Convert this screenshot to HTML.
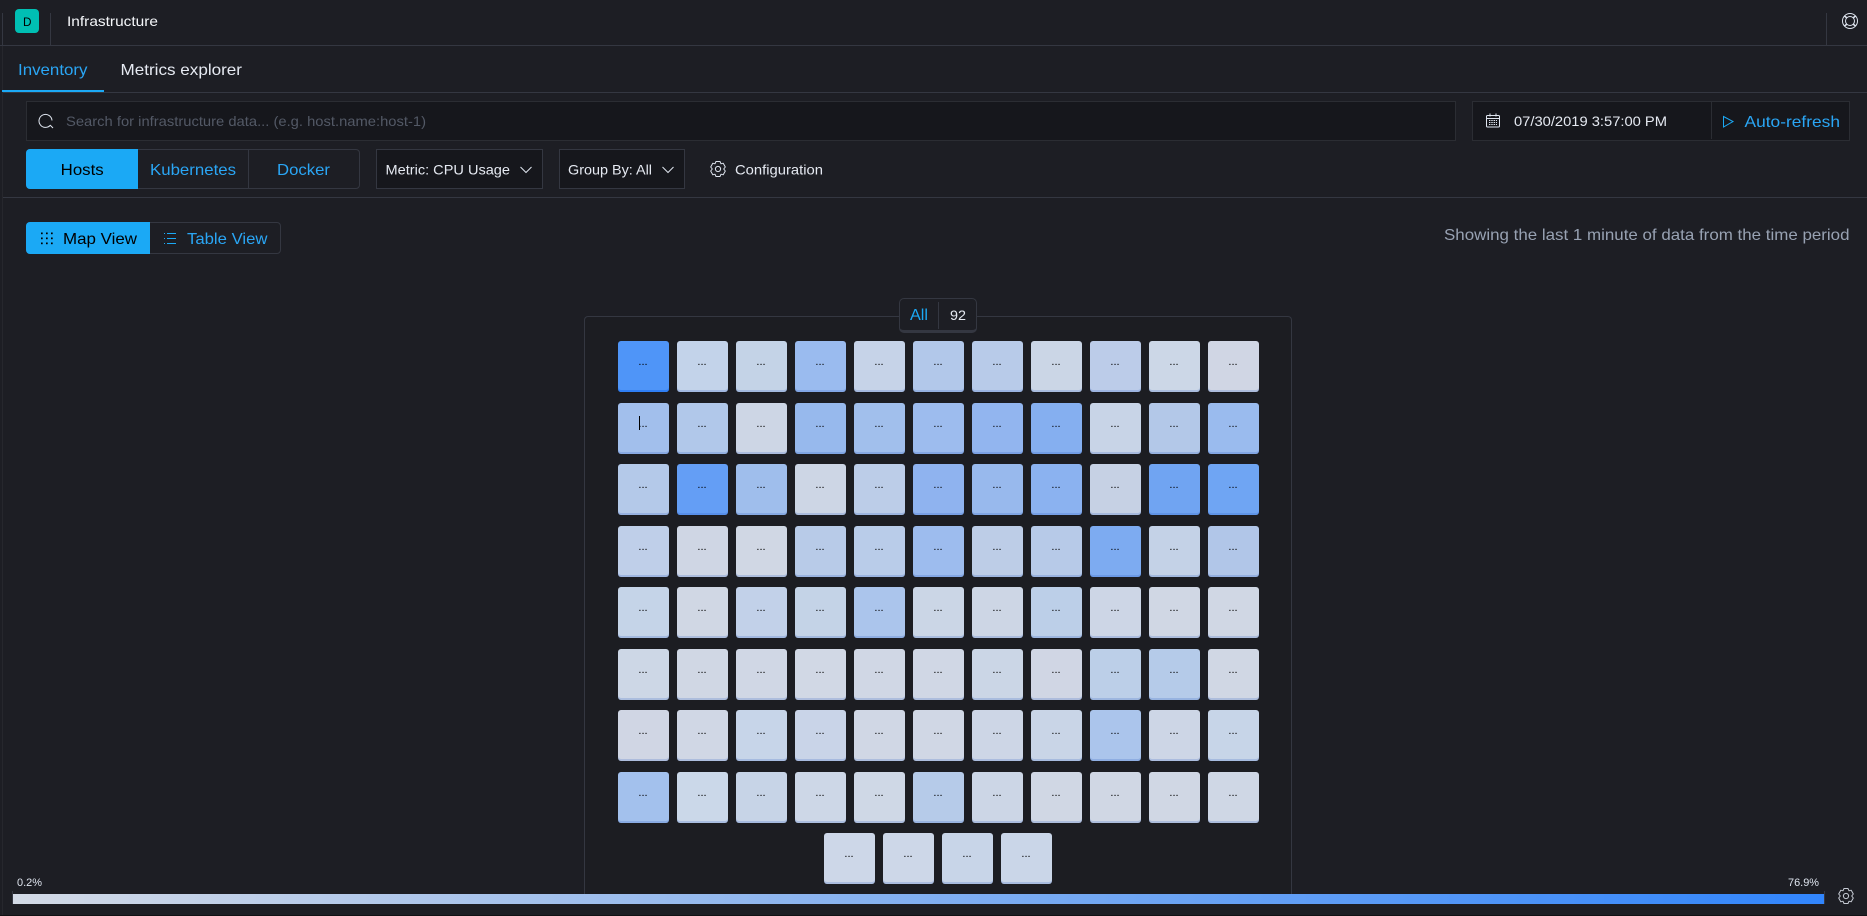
<!DOCTYPE html>
<html lang="en">
<head>
<meta charset="utf-8">
<title>Infrastructure</title>
<style>
html,body{margin:0;padding:0;width:1867px;height:916px;overflow:hidden;background:#1d1e24;font-family:"Liberation Sans",sans-serif}
.a{position:absolute;box-sizing:border-box}
.line{background:#343741}
.box{background:#16171c;border:1px solid #2b2d33}
.row{position:absolute;left:618px;display:flex;gap:8px}
.row.l{left:824px}
.c{width:51px;height:51px;border-radius:3px;box-shadow:inset 0 -2px 0 rgba(35,85,190,.2);text-align:center;font-size:11px;line-height:43px;color:#000;text-indent:-1px;flex:none}
svg.o{position:absolute;left:0;top:0;width:1867px;height:916px}
svg text{font-family:"Liberation Sans",sans-serif}
</style>
</head>
<body>
<!-- rules -->
<div class="a line" style="left:0;top:45px;width:1867px;height:1px"></div>
<div class="a line" style="left:2px;top:92px;width:1865px;height:1px"></div>
<div class="a line" style="left:2px;top:197px;width:1865px;height:1px"></div>
<div class="a line" style="left:2px;top:13px;width:1px;height:32px"></div>
<div class="a" style="left:2px;top:46px;width:1px;height:870px;background:#26272d"></div>
<div class="a line" style="left:50px;top:13px;width:1px;height:32px"></div>
<div class="a line" style="left:1826px;top:13px;width:1px;height:32px"></div>
<div class="a" style="left:0;top:915px;width:1867px;height:1px;background:#101114"></div>

<!-- logo -->
<div class="a" style="left:15px;top:9px;width:24px;height:24px;background:#00bfb3;border-radius:4px"></div>

<!-- tab underline -->
<div class="a" style="left:2px;top:90px;width:102px;height:2px;background:#1ba9f5"></div>

<!-- search + date -->
<div class="a box" style="left:26px;top:101px;width:1430px;height:40px"></div>
<div class="a box" style="left:1472px;top:101px;width:378px;height:40px"></div>
<div class="a" style="left:1711px;top:102px;width:1px;height:37px;background:#2b2d33"></div>

<!-- type toggle -->
<div class="a" style="left:26px;top:149px;width:334px;height:40px;border:1px solid #343741;border-radius:4px"></div>
<div class="a" style="left:26px;top:149px;width:112px;height:40px;background:#1ba9f5;border-radius:4px 0 0 4px"></div>
<div class="a line" style="left:248px;top:150px;width:1px;height:38px"></div>

<!-- selects -->
<div class="a box" style="left:376px;top:149px;width:167px;height:40px;border-color:#343741"></div>
<div class="a box" style="left:559px;top:149px;width:126px;height:40px;border-color:#343741"></div>

<!-- view toggle -->
<div class="a" style="left:26px;top:222px;width:255px;height:32px;border:1px solid #343741;border-radius:4px"></div>
<div class="a" style="left:26px;top:222px;width:124px;height:32px;background:#1ba9f5;border-radius:4px 0 0 4px"></div>

<!-- group panel -->
<div class="a" style="left:584px;top:316px;width:708px;height:578px;border:1px solid #343741;border-bottom:0;border-radius:4px 4px 0 0;background:#1c1d22"></div>
<div class="a" style="left:899px;top:298px;width:78px;height:35px;background:#1d1e24;border:1px solid #343741;border-bottom:3px solid #343741;border-radius:5px"></div>
<div class="a line" style="left:938px;top:302px;width:1px;height:27px"></div>

<!-- grid -->
<div class="row" style="top:341px">
<div class="c" style="background:#4f95f8;box-shadow:inset 0 -2px 0 #2f7ff5">...</div><div class="c" style="background:#c3d3ea">...</div><div class="c" style="background:#c4d3e7">...</div><div class="c" style="background:#9abbef">...</div><div class="c" style="background:#c6d3e8">...</div><div class="c" style="background:#b2c8ea">...</div><div class="c" style="background:#b8cbe9">...</div><div class="c" style="background:#cbd6e6">...</div><div class="c" style="background:#bccce9">...</div><div class="c" style="background:#ccd7e7">...</div><div class="c" style="background:#d0d6e4">...</div>
</div>
<div class="row" style="top:403px">
<div class="c" style="background:#a2bfec">...</div><div class="c" style="background:#b1c8ea">...</div><div class="c" style="background:#cdd6e5">...</div><div class="c" style="background:#97b9ed">...</div><div class="c" style="background:#a1bfec">...</div><div class="c" style="background:#9dbcee">...</div><div class="c" style="background:#92b5ef">...</div><div class="c" style="background:#85aff0">...</div><div class="c" style="background:#c8d4e7">...</div><div class="c" style="background:#b3c8e8">...</div><div class="c" style="background:#9abbee">...</div>
</div>
<div class="row" style="top:464px">
<div class="c" style="background:#b4c9e9">...</div><div class="c" style="background:#649ef5">...</div><div class="c" style="background:#9fbeec">...</div><div class="c" style="background:#cdd6e5">...</div><div class="c" style="background:#bccde8">...</div><div class="c" style="background:#8fb3ef">...</div><div class="c" style="background:#98b9ed">...</div><div class="c" style="background:#8bb2f0">...</div><div class="c" style="background:#c6d1e4">...</div><div class="c" style="background:#70a4f2">...</div><div class="c" style="background:#6fa5f3">...</div>
</div>
<div class="row" style="top:526px">
<div class="c" style="background:#bfcfe9">...</div><div class="c" style="background:#cfd6e4">...</div><div class="c" style="background:#d0d7e4">...</div><div class="c" style="background:#b8cbe8">...</div><div class="c" style="background:#b9cce9">...</div><div class="c" style="background:#9dbcee">...</div><div class="c" style="background:#bdcde7">...</div><div class="c" style="background:#b7cae8">...</div><div class="c" style="background:#7dabf1">...</div><div class="c" style="background:#c4d2e7">...</div><div class="c" style="background:#b1c6e8">...</div>
</div>
<div class="row" style="top:587px">
<div class="c" style="background:#c5d4e8">...</div><div class="c" style="background:#d0d7e4">...</div><div class="c" style="background:#c2d1e9">...</div><div class="c" style="background:#c4d3e7">...</div><div class="c" style="background:#abc5ec">...</div><div class="c" style="background:#cbd6e6">...</div><div class="c" style="background:#cdd6e5">...</div><div class="c" style="background:#bccfe8">...</div><div class="c" style="background:#cdd6e6">...</div><div class="c" style="background:#d0d7e4">...</div><div class="c" style="background:#d0d7e4">...</div>
</div>
<div class="row" style="top:649px">
<div class="c" style="background:#cdd7e6">...</div><div class="c" style="background:#d0d7e4">...</div><div class="c" style="background:#d0d7e5">...</div><div class="c" style="background:#d1d8e5">...</div><div class="c" style="background:#d0d7e5">...</div><div class="c" style="background:#d0d7e5">...</div><div class="c" style="background:#cbd6e6">...</div><div class="c" style="background:#d0d6e4">...</div><div class="c" style="background:#bccfe8">...</div><div class="c" style="background:#b5cbe9">...</div><div class="c" style="background:#d0d7e4">...</div>
</div>
<div class="row" style="top:710px">
<div class="c" style="background:#d0d6e4">...</div><div class="c" style="background:#d0d7e5">...</div><div class="c" style="background:#c7d5e9">...</div><div class="c" style="background:#c9d4e8">...</div><div class="c" style="background:#d0d7e5">...</div><div class="c" style="background:#d0d7e5">...</div><div class="c" style="background:#cdd6e6">...</div><div class="c" style="background:#c9d5e7">...</div><div class="c" style="background:#abc5ec">...</div><div class="c" style="background:#cdd6e6">...</div><div class="c" style="background:#c7d5e8">...</div>
</div>
<div class="row" style="top:772px">
<div class="c" style="background:#a3c1ed">...</div><div class="c" style="background:#cbd8e9">...</div><div class="c" style="background:#c7d4e7">...</div><div class="c" style="background:#cdd7e7">...</div><div class="c" style="background:#cfd8e6">...</div><div class="c" style="background:#b6cbe9">...</div><div class="c" style="background:#ccd6e6">...</div><div class="c" style="background:#d0d7e4">...</div><div class="c" style="background:#d0d7e4">...</div><div class="c" style="background:#d0d7e4">...</div><div class="c" style="background:#cfd7e5">...</div>
</div>
<div class="row l" style="top:833px">
<div class="c" style="background:#cdd7e8">...</div><div class="c" style="background:#cdd7e8">...</div><div class="c" style="background:#c8d5e8">...</div><div class="c" style="background:#cad6e8">...</div>
</div>
<div class="a" style="left:639px;top:416px;width:1px;height:14px;background:#000"></div>

<!-- legend -->
<div class="a" style="left:13px;top:894px;width:1811px;height:10px;background:linear-gradient(90deg,#d3dae6,#3185fc)"></div>
<div class="a line" style="left:12px;top:891px;width:1px;height:13px"></div>
<div class="a line" style="left:1824px;top:891px;width:1px;height:13px"></div>

<!-- text + icons -->
<svg class="o" viewBox="0 0 1867 916" xmlns="http://www.w3.org/2000/svg">
<text x="23" y="26" font-size="12" fill="#000" textLength="8.5" lengthAdjust="spacingAndGlyphs">D</text>
<text x="67" y="26" font-size="14" fill="#f5f7fa" textLength="91" lengthAdjust="spacingAndGlyphs">Infrastructure</text>
<text x="18" y="75" font-size="16" fill="#2aa6f5" textLength="69.5" lengthAdjust="spacingAndGlyphs">Inventory</text>
<text x="120.5" y="75" font-size="16" fill="#e6eaf2" textLength="121.5" lengthAdjust="spacingAndGlyphs">Metrics explorer</text>
<text x="66" y="126" font-size="14" fill="#535966" textLength="360" lengthAdjust="spacingAndGlyphs">Search for infrastructure data... (e.g. host.name:host-1)</text>
<text x="60.7" y="175" font-size="16" fill="#000" textLength="43" lengthAdjust="spacingAndGlyphs">Hosts</text>
<text x="150" y="175" font-size="16" fill="#2aa6f5" textLength="86" lengthAdjust="spacingAndGlyphs">Kubernetes</text>
<text x="277" y="175" font-size="16" fill="#2aa6f5" textLength="53" lengthAdjust="spacingAndGlyphs">Docker</text>
<text x="385.5" y="174.5" font-size="14" fill="#e6eaf2" textLength="124.5" lengthAdjust="spacingAndGlyphs">Metric: CPU Usage</text>
<text x="568" y="174.5" font-size="14" fill="#e6eaf2" textLength="84" lengthAdjust="spacingAndGlyphs">Group By: All</text>
<text x="735" y="174.5" font-size="14" fill="#e6eaf2" textLength="88" lengthAdjust="spacingAndGlyphs">Configuration</text>
<text x="63" y="244" font-size="16" fill="#000" textLength="74" lengthAdjust="spacingAndGlyphs">Map View</text>
<text x="187" y="244" font-size="16" fill="#2aa6f5" textLength="80.5" lengthAdjust="spacingAndGlyphs">Table View</text>
<text x="1514" y="126" font-size="14" fill="#e6eaf2" textLength="153" lengthAdjust="spacingAndGlyphs">07/30/2019 3:57:00 PM</text>
<text x="1744.5" y="127" font-size="16" fill="#2aa6f5" textLength="95.5" lengthAdjust="spacingAndGlyphs">Auto-refresh</text>
<text x="1444" y="240" font-size="16" fill="#98a2b3" textLength="405.5" lengthAdjust="spacingAndGlyphs">Showing the last 1 minute of data from the time period</text>
<text x="910" y="320" font-size="16" fill="#1ba9f5" textLength="18" lengthAdjust="spacingAndGlyphs">All</text>
<text x="950" y="320" font-size="14" fill="#e6eaf2" textLength="16" lengthAdjust="spacingAndGlyphs">92</text>
<text x="17" y="886" font-size="11" fill="#dfe5ef" textLength="25" lengthAdjust="spacingAndGlyphs">0.2%</text>
<text x="1788" y="886" font-size="11" fill="#dfe5ef" textLength="31" lengthAdjust="spacingAndGlyphs">76.9%</text>

<!-- search icon -->
<g fill="none" stroke="#dfe5ef" stroke-width="1">
<path d="M50.2 125.4A6.5 6.5 0 1 1 52 120.5"/>
<path d="M50 125l3 3"/>
</g>
<!-- chevrons -->
<path d="M520.5 167l5.5 5.5 5.5-5.5M662.5 167l5.5 5.5 5.5-5.5" fill="none" stroke="#dfe5ef" stroke-width="1"/>
<!-- config gear -->
<g transform="translate(718 169)" fill="none" stroke="#dfe5ef" stroke-width="1" stroke-linejoin="round">
<path d="M-2-7.5H2L3-5.2 5.2-5.8 7.3-2 5.7 0 7.3 2 5.2 5.8 3 5.2 2 7.5H-2L-3 5.2-5.2 5.8-7.3 2-5.7 0-7.3-2-5.2-5.8-3-5.2Z"/>
<circle r="2.6"/>
</g>
<!-- legend gear -->
<g transform="translate(1846 896)" fill="none" stroke="#c6cbd4" stroke-width="1" stroke-linejoin="round">
<path d="M-2-7.5H2L3-5.2 5.2-5.8 7.3-2 5.7 0 7.3 2 5.2 5.8 3 5.2 2 7.5H-2L-3 5.2-5.2 5.8-7.3 2-5.7 0-7.3-2-5.2-5.8-3-5.2Z"/>
<circle r="2.6"/>
</g>
<!-- calendar -->
<g fill="none" stroke="#dfe5ef" stroke-width="1">
<rect x="1486.5" y="115.5" width="13" height="11.5" rx="1"/>
<path d="M1486.5 118.5h13M1490 113.5v3M1496 113.5v3"/>
<path d="M1489 120.5h8M1489 122.5h8M1489 124.5h8" stroke-dasharray="1.4 .9"/>
</g>
<!-- play -->
<path d="M1723.5 116.5l9.5 5-9.5 5.5z" fill="none" stroke="#1ba9f5" stroke-width="1"/>
<!-- support -->
<g fill="none" stroke="#dfe5ef" stroke-width="1">
<circle cx="1850" cy="21" r="7.5"/>
<circle cx="1850" cy="21" r="4.5"/>
<path d="M1844.5 16l2.5 2M1855.5 16l-2.5 2M1844.5 26l2.5-2M1855.5 26l-2.5-2" stroke-width="1.6"/>
</g>
<!-- map icon -->
<g fill="#000">
<rect x="41" y="232.5" width="1.7" height="1.7"/><rect x="46" y="232.5" width="1.7" height="1.7"/><rect x="51" y="232.5" width="1.7" height="1.7"/>
<rect x="41" y="237.5" width="1.7" height="1.7"/><rect x="46" y="237.5" width="1.7" height="1.7"/><rect x="51" y="237.5" width="1.7" height="1.7"/>
<rect x="41" y="242.5" width="1.7" height="1.7"/><rect x="46" y="242.5" width="1.7" height="1.7"/><rect x="51" y="242.5" width="1.7" height="1.7"/>
</g>
<!-- table icon -->
<path d="M167 233.5h9M167 238.5h9M167 243.5h9M164 233.5h1M164 238.5h1M164 243.5h1" fill="none" stroke="#1ba9f5" stroke-width="1"/>
</svg>
</body>
</html>
